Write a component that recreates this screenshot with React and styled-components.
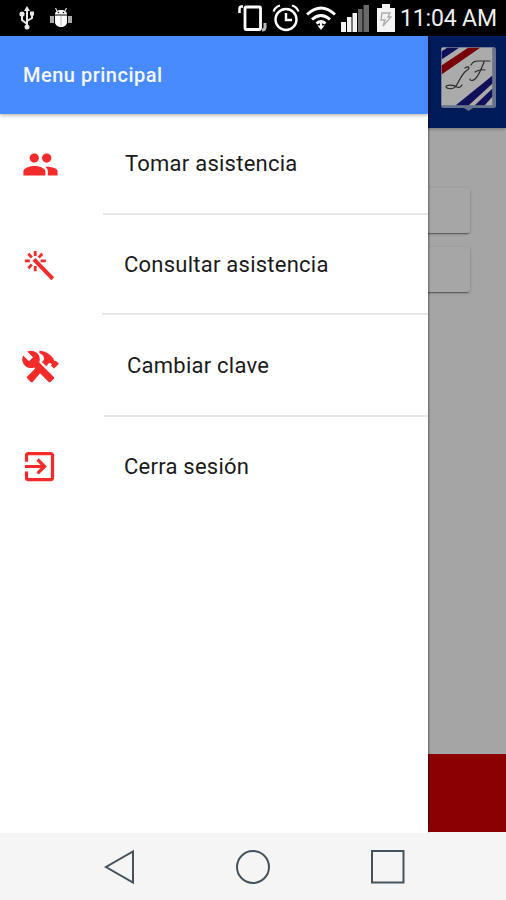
import React from 'react'
import styled, { createGlobalStyle } from 'styled-components'
import { IoMdPeople, IoMdColorWand, IoMdConstruct, IoMdExit } from 'react-icons/io'

const GlobalStyle = createGlobalStyle`
    * {
        box-sizing : border-box;
    }

    body {
        margin : 0;
        font-family : Roboto, sans-serif;
    }
`;

const Phone = styled.div`
    display : flex;
    flex-direction : column;
    width : 506px;
    height : 900px;
    overflow : hidden;
    background-color : #f5f5f5;
`;

const StatusBar = styled.header`
    display : flex;
    align-items : center;
    height : 36px;
    flex-shrink : 0;
    padding : 0 10px 0 18px;
    background-color : #000;
    color : #fff;
`;

const StatusGroup = styled.div`
    display : flex;
    align-items : center;
    column-gap : ${(props) => props.$gap};
    margin-left : ${(props) => (props.$right ? "auto" : "0px")};
`;

const Clock = styled.span`
    width : 96px;
    padding-top : 1px;
    font-size : 23px;
    line-height : 36px;
    letter-spacing : -0.15px;
    white-space : nowrap;
    color : #eee;
`;

const Screen = styled.div`
    position : relative;
    height : 797px;
    flex-shrink : 0;
`;

const Page = styled.div`
    display : flex;
    flex-direction : column;
    height : 796px;
    background-color : #a5a5a5;
`;

const Toolbar = styled.div`
    display : flex;
    justify-content : flex-end;
    align-items : flex-start;
    height : 92px;
    padding : 10px 9px 0 0;
    background-color : #001b59;
    box-shadow : 0 1px 3px rgba(0, 0, 0, 0.3);
`;

const PageContent = styled.main`
    display : flex;
    flex-direction : column;
    row-gap : 14px;
    flex : 1;
    padding : 60px 36px 0;
`;

const PageButton = styled.div`
    height : 45px;
    border-radius : 3px;
    background-color : #a6a6a6;
    box-shadow : 0 2px 1px -1px rgba(0, 0, 0, 0.35), 0 1px 3px rgba(0, 0, 0, 0.25);
`;

const Footer = styled.div`
    height : 78px;
    background-color : #8b0000;
`;

const Drawer = styled.nav`
    position : absolute;
    top : 0;
    left : 0;
    width : 428px;
    height : 797px;
    background-color : #fff;
    box-shadow : 1px 0 2px rgba(0, 0, 0, 0.4);
    clip-path : inset(0 -4px 0 0);
`;

const DrawerHeader = styled.div`
    display : flex;
    align-items : center;
    height : 78px;
    padding-left : 23px;
    background-color : #488aff;
    box-shadow : 0 1px 4px rgba(0, 0, 0, 0.35);
`;

const DrawerTitle = styled.h1`
    margin : 0;
    font-size : 20px;
    font-weight : 500;
    letter-spacing : 0.5px;
    color : #f5f8ff;
`;

const MenuItem = styled.div`
    display : flex;
    height : ${(props) => props.$height}px;
`;

const IconCell = styled.div`
    display : flex;
    align-items : center;
    flex-shrink : 0;
    width : ${(props) => props.$width}px;
    padding-left : ${(props) => props.$left}px;
    color : #f52b2b;
`;

const Label = styled.div`
    display : flex;
    align-items : center;
    flex : 1;
    padding-left : ${(props) => props.$indent}px;
    border-bottom : ${(props) => (props.$last ? "0" : "2px solid #e6e6e6")};
    font-size : 22px;
    letter-spacing : 0.24px;
    color : #1a1a1a;
`;

const NavBar = styled.footer`
    display : flex;
    align-items : center;
    justify-content : space-between;
    flex : 1;
    padding : 0 100px 0 104px;
    background-color : #f5f5f5;
`;

const items = [
    { icon: IoMdPeople, text: "Tomar asistencia", height: 101, cell: 103, left: 21, indent: 22 },
    { icon: IoMdColorWand, text: "Consultar asistencia", height: 100, cell: 102, left: 20, indent: 22 },
    { icon: IoMdConstruct, text: "Cambiar clave", height: 102, cell: 104, left: 21, indent: 23 },
    { icon: IoMdExit, text: "Cerra sesión", height: 99, cell: 102, left: 20, indent: 22 },
];

const UsbIcon = () => (
    <svg width="17" height="26" viewBox="0 0 17 26" fill="none" stroke="#e8e8e8" strokeWidth="2">
        <path d="M9 4v19M9 19l-5-4v-5M9 16l5-3V9" />
        <path d="M9 1l3 5H6z" fill="#e8e8e8" stroke="none" />
        <circle cx="4" cy="9" r="2.6" fill="#e8e8e8" stroke="none" />
        <path d="M12 6.500h4v4h-4z" fill="#e8e8e8" stroke="none" />
        <circle cx="9" cy="22" r="2.500" fill="#e8e8e8" stroke="none" />
    </svg>
)

const AndroidIcon = () => (
    <svg width="24" height="22" viewBox="0 0 24 22">
        <path d="M6 7.500C6 4.500 8.500 3 12 3s6 1.500 6 4.500z" fill="#fff" />
        <path d="M8 4L6.500 1M16 4l1.500-3" stroke="#ddd" strokeWidth="1.200" />
        <path d="M6 8.500h12V15c0 3-3 5-6 5s-6-2-6-5z" fill="#fff" />
        <path d="M1 9h4v7H1zM19 9h4v7h-4z" fill="#aaa" />
        <path d="M12 9v10" stroke="#bbb" />
        <circle cx="9.500" cy="5.500" r="0.800" />
        <circle cx="14.500" cy="5.500" r="0.800" />
    </svg>
)

const RotateIcon = () => (
    <svg width="29" height="28" viewBox="0 0 29 28" fill="none" stroke="#fff">
        <rect x="7" y="3" width="15.500" height="22.500" rx="1" strokeWidth="2.800" />
        <path d="M5 2.500H3.500Q1.500 2.500 1.500 5v4" strokeWidth="2.500" />
        <path d="M27 19v4q0 3-3 3" stroke="#bbb" strokeWidth="3" />
    </svg>
)

const AlarmIcon = () => (
    <svg width="28" height="28" viewBox="0 0 28 28" fill="none" stroke="#fff" strokeWidth="2.400">
        <circle cx="14" cy="15.500" r="10.500" />
        <path d="M14 9v7h6" />
        <path d="M1.500 7.500Q3 3 8 1.500M26.500 7.500Q25 3 20 1.500" strokeWidth="2.200" />
    </svg>
)

const WifiIcon = () => (
    <svg width="30" height="26" viewBox="0 0 30 26" fill="none" stroke="#fff" strokeWidth="3">
        <path d="M1 9.500Q15-3.500 29 9.500" />
        <path d="M6 14.500Q15 6.500 24 14.500" />
        <path d="M10.500 18.500Q15 14.500 19.500 18.500" />
        <path d="M15 16v6" strokeWidth="2" />
        <path d="M11.500 20.500h7L15 25z" fill="#fff" stroke="none" />
    </svg>
)

const SignalIcon = () => (
    <svg width="28" height="27" viewBox="0 0 28 27">
        <path d="M0 17h5v10H0zM6 12h4.500v15H6zM11.500 8H16v19h-4.500z" fill="#f4f4f4" />
        <path d="M17 4h4.500v23H17zM22.500 0H28v27h-5.500z" fill="#696969" />
    </svg>
)

const BatteryIcon = () => (
    <svg width="20" height="28" viewBox="-2 0 20 28">
        <path d="M5 0h8v4h5v24H0V4h5z" fill="#f4f4f4" />
        <path d="M5 9h8l-2 4h3L6 22l2-6H4z" fill="none" stroke="#aaa" strokeWidth="1.300" />
    </svg>
)

const Logo = () => (
    <svg width="57" height="65" viewBox="0 0 57 65">
        <rect x="1" y="1" width="55" height="61" rx="2.500" fill="#66718b" />
        <path d="M24 62h9l-4.500 3z" fill="#66718b" />
        <svg x="1.500" y="1.500" width="51" height="58" viewBox="0 0 51 58">
            <rect width="51" height="58" fill="#ababab" />
            <path d="M6 0h12L0 12V4z" fill="#10105a" />
            <path d="M27 0h12L0 27V18z" fill="#790008" />
            <path d="M51 28v8L27 58H14zM51 41v8L43 58H33z" fill="#10105a" />
        </svg>
        <g fill="none" stroke="#292929" strokeWidth="1.200" strokeLinecap="round">
            <path d="M25 22c5-3 5 1 1 3-5 4-7 11-10 15-3 4-9 3-10 1 0-3 8-2 11 0 2 1 4 0 5-2" />
            <path d="M31 19q2-4 7-4h12M44 16c-2 5-5 14-9 17-2 2-5 2-5 0M35 26q5-3 10-2" />
        </g>
    </svg>
)

export default function App() {
    return (
        <>
            <GlobalStyle />
            <Phone>
                <StatusBar>
                    <StatusGroup $gap="14px">
                        <UsbIcon />
                        <AndroidIcon />
                    </StatusGroup>
                    <StatusGroup $gap="5.5px" $right>
                        <RotateIcon />
                        <AlarmIcon />
                        <WifiIcon />
                        <SignalIcon />
                        <BatteryIcon />
                        <Clock>11:04 AM</Clock>
                    </StatusGroup>
                </StatusBar>
                <Screen>
                    <Page>
                        <Toolbar>
                            <Logo />
                        </Toolbar>
                        <PageContent>
                            <PageButton />
                            <PageButton />
                        </PageContent>
                        <Footer />
                    </Page>
                    <Drawer>
                        <DrawerHeader>
                            <DrawerTitle>Menu principal</DrawerTitle>
                        </DrawerHeader>
                        {items.map((item, i) => (
                            <MenuItem key={item.text} $height={item.height}>
                                <IconCell $width={item.cell} $left={item.left}>
                                    <item.icon size={39} />
                                </IconCell>
                                <Label $indent={item.indent} $last={i === items.length - 1}>
                                    {item.text}
                                </Label>
                            </MenuItem>
                        ))}
                    </Drawer>
                </Screen>
                <NavBar>
                    <svg width="31" height="36" viewBox="0 0 31 36" fill="none" stroke="#44525e" strokeWidth="2">
                        <path d="M29 2.500v31L2 18z" />
                    </svg>
                    <svg width="36" height="36" viewBox="0 0 36 36" fill="none" stroke="#44525e" strokeWidth="2">
                        <circle cx="18" cy="18" r="16" />
                    </svg>
                    <svg width="36" height="36" viewBox="0 0 36 36" fill="none" stroke="#44525e" strokeWidth="2">
                        <path d="M2 2h31.500v31.500H2z" />
                    </svg>
                </NavBar>
            </Phone>
        </>
    )
}
